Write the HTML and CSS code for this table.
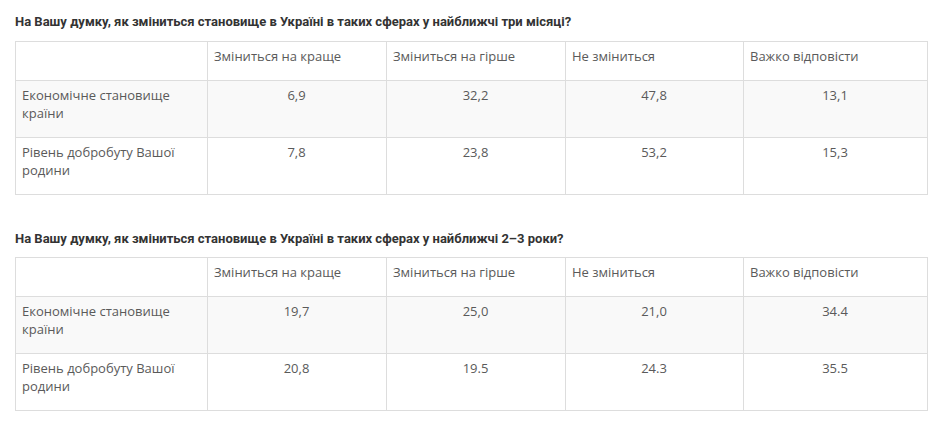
FILE: index.html
```html
<!DOCTYPE html>
<html lang="uk">
<head>
<meta charset="utf-8">
<link rel="stylesheet" href="styles.css">
</head>
<body>
<section class="block">
  <h3 class="title">На Вашу думку, як зміниться становище в Україні в таких сферах у найближчі три місяці?</h3>
  <table class="data">
    <colgroup><col class="c0"><col class="c1"><col class="c2"><col class="c3"><col class="c4"></colgroup>
    <tr class="head"><td></td><td>Зміниться на краще</td><td>Зміниться на гірше</td><td>Не зміниться</td><td>Важко відповісти</td></tr>
    <tr class="odd"><td>Економічне становище країни</td><td class="num">6,9</td><td class="num">32,2</td><td class="num">47,8</td><td class="num">13,1</td></tr>
    <tr><td>Рівень добробуту Вашої родини</td><td class="num">7,8</td><td class="num">23,8</td><td class="num">53,2</td><td class="num">15,3</td></tr>
  </table>
</section>
<section class="block">
  <h3 class="title">На Вашу думку, як зміниться становище в Україні в таких сферах у найближчі 2–3 роки?</h3>
  <table class="data">
    <colgroup><col class="c0"><col class="c1"><col class="c2"><col class="c3"><col class="c4"></colgroup>
    <tr class="head"><td></td><td>Зміниться на краще</td><td>Зміниться на гірше</td><td>Не зміниться</td><td>Важко відповісти</td></tr>
    <tr class="odd"><td>Економічне становище країни</td><td class="num">19,7</td><td class="num">25,0</td><td class="num">21,0</td><td class="num">34.4</td></tr>
    <tr><td>Рівень добробуту Вашої родини</td><td class="num">20,8</td><td class="num">19.5</td><td class="num">24.3</td><td class="num">35.5</td></tr>
  </table>
</section>
</body>
</html>
```
FILE: styles.css
```css
html, body {
  margin: 0;
  padding: 0;
  background: #fff;
}
body {
  padding: 0 14px 0 15px;
  font-family: "Open Sans", "Liberation Sans", sans-serif;
  color: #5a5a5a;
}
.block {
  margin-bottom: 35px;
}
.title {
  margin: 13px 0 10px;
  font-family: Roboto, "Liberation Sans", sans-serif;
  font-size: 13px;
  line-height: 18px;
  font-weight: 700;
  color: #333;
}
.block + .block .title {
  margin-bottom: 9px;
}
.data {
  border-collapse: collapse;
  width: 912px;
  table-layout: fixed;
  font-size: 13px;
  line-height: 18px;
}
.data td {
  border: 1px solid #ddd;
  padding: 5px 7px 15px 6px;
  vertical-align: top;
  text-align: left;
}
.data td.num {
  text-align: center;
}
.data tr.odd td {
  background: #f9f9f9;
}
.c0 { width: 192px; }
.c1 { width: 179px; }
.c2 { width: 179px; }
.c3 { width: 178px; }
.c4 { width: 184px; }
```
